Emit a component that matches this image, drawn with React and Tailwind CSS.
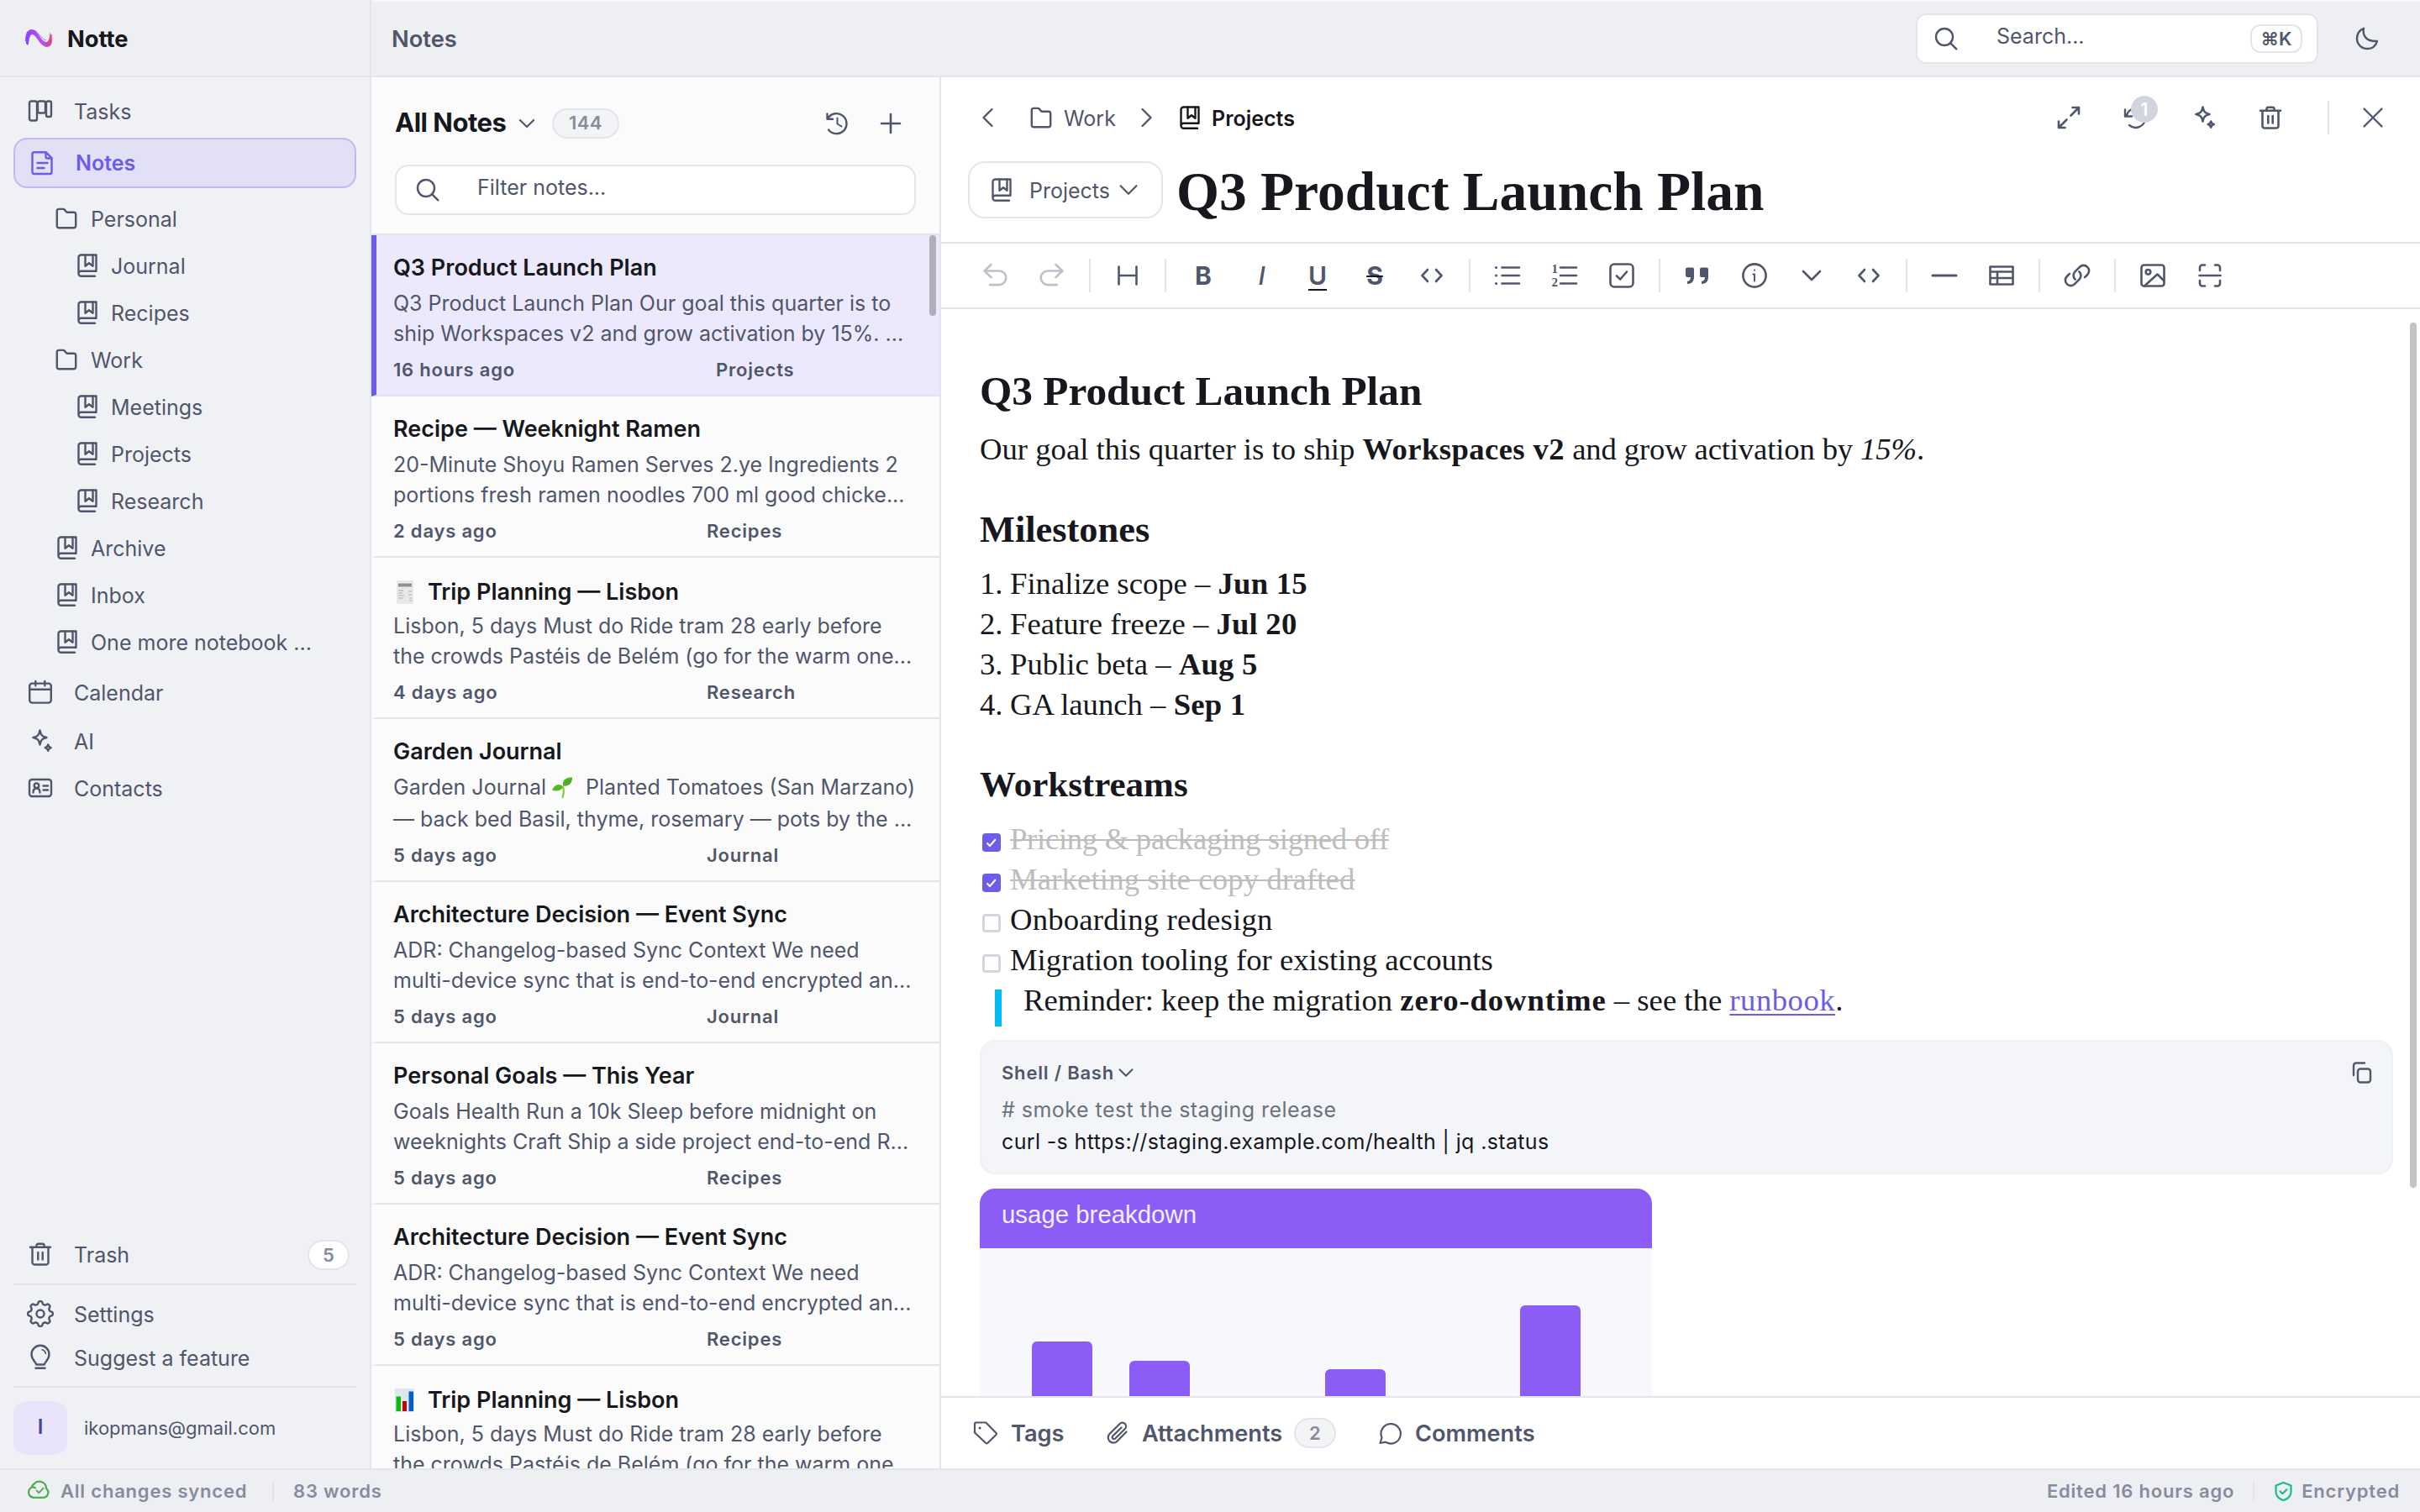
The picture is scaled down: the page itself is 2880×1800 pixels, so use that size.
import { clsx } from 'clsx'

const gearPoints = Array.from({ length: 120 }, (_, i) => {
  const angle = (i / 120) * Math.PI * 2
  const wave = Math.tanh(2 * Math.cos(angle * 8)) * 1.7
  const radius = 13.2 + wave
  return `${(16 + radius * Math.sin(angle)).toFixed(2)},${(16 - radius * Math.cos(angle)).toFixed(2)}`
}).join(' ')

const icons = {
  tasks: (
    <>
      <rect x="3" y="4.5" width="9" height="23" rx="2" />
      <rect x="13" y="4.5" width="9" height="14" rx="2" />
      <rect x="23" y="4.5" width="6" height="18.5" rx="2" />
    </>
  ),
  file: (
    <>
      <path d="M4.5 5.2a2 2 0 0 1 2-2h14l7 7V27a2 2 0 0 1-2 2h-19a2 2 0 0 1-2-2z" />
      <path d="M20.5 3.5v5a2 2 0 0 0 2 2h5M10.5 16h12M10.5 22h8" />
    </>
  ),
  folder: (
    <path d="M4.8 7.2V25a2.3 2.3 0 0 0 2.3 2.3h17.8a2.3 2.3 0 0 0 2.3-2.3V11a2.3 2.3 0 0 0-2.3-2.3h-8.4L13.7 5.6a2 2 0 0 0-1.5-.7H7.1a2.3 2.3 0 0 0-2.3 2.3z" />
  ),
  book: (
    <>
      <path d="M5.5 26V6.5a3 3 0 0 1 3-3h18v19.3H8.5a3 3 0 0 0 0 6H25" />
      <path d="M13.5 3.5v13.3l4.5-3.6 4.5 3.6V3.5" />
    </>
  ),
  calendar: (
    <>
      <rect x="3.2" y="5.6" width="25.6" height="23" rx="3" />
      <path d="M3.2 12.8h25.6M10.3 3v5.2M21.3 3v5.2" />
    </>
  ),
  sparkles: (
    <>
      <path d="M15.5 3.5c1.2 5.8 2.6 7.3 8 8.5-5.4 1.2-6.8 2.7-8 8.5-1.2-5.8-2.6-7.3-8-8.5 5.4-1.2 6.8-2.7 8-8.5z" />
      <path d="M25.2 20.5c.5 2.4 1.1 3 3.5 3.6-2.4.6-3 1.2-3.5 3.6-.5-2.4-1.1-3-3.5-3.6 2.4-.6 3-1.2 3.5-3.6z" />
    </>
  ),
  contact: (
    <>
      <rect x="3" y="6" width="26" height="20" rx="3" />
      <circle cx="11.5" cy="13.2" r="2.8" />
      <path d="M7.5 21.5c0-3.6 1.5-5 4-5s4 1.4 4 5M19.5 13.5h5.5M19.5 18.5h5.5" />
    </>
  ),
  trash: (
    <>
      <path d="M4 7.8h24M6.5 7.8V26A2.5 2.5 0 0 0 9 28.5h14a2.5 2.5 0 0 0 2.5-2.5V7.8M11.5 7.5V5.7a2 2 0 0 1 2-2h5a2 2 0 0 1 2 2v1.8" />
      <path d="M13.3 14v8.5M18.7 14v8.5" />
    </>
  ),
  gear: (
    <>
      <polygon points={gearPoints} />
      <circle cx="16" cy="16" r="4.5" />
    </>
  ),
  bulb: (
    <>
      <path d="M11.2 24.5c-.3-3-5.7-5.5-5.7-12.2a10.5 10.5 0 0 1 21 0c0 6.7-5.4 9.2-5.7 12.2z" />
      <path d="M10.5 28.8h11" />
      <path d="M18 6.8c2.5.6 3.8 2.2 4.4 4.6" strokeWidth="1.6" />
    </>
  ),
  search: (
    <>
      <circle cx="14" cy="14" r="10" />
      <path d="M21.3 21.3l7 7" />
    </>
  ),
  moon: <path d="M12 3.8c-1.7 8.5 3 16 16 15.2-1.8 6-6.3 9-11.5 9C9.5 28 4 22.8 4 16c0-5.5 3-10.2 8-12.2z" />,
  history: (
    <>
      <path d="M5.5 9.5a12 12 0 1 1 .5 14M4.5 4.5v6.3H11" />
      <path d="M16.5 9.5v7l5 3" strokeWidth="2" />
    </>
  ),
  plus: <path d="M16 5v22M5 16h22" />,
  chevronDown: <path d="M6 11l10 10 10-10" />,
  chevronLeft: <path d="M20.5 6l-10 10 10 10" />,
  chevronRight: <path d="M11.5 6l10 10-10 10" />,
  close: <path d="M5.5 5.5l21 21M26.5 5.5l-21 21" />,
  expand: <path d="M18.5 13.5L28 4M20.5 4H28v7.5M13.5 18.5L4 28M4 20.5V28h7.5" />,
  sync: <path d="M5 13.5A11.5 11.5 0 0 1 25 9M3 6.5v8h8M27 17.5A11.5 11.5 0 0 1 8 25" />,
  undo: <path d="M11.5 3L3.5 10.5l8 7.5M4 10.5h17a8.3 8.3 0 0 1 0 16.6H10" />,
  redo: <path d="M20.5 3l8 7.5-8 7.5M28 10.5H11a8.3 8.3 0 0 0 0 16.6h11" />,
  heading: <path d="M5.5 5.5v21M26.5 5.5v21M5.5 16h21" />,
  code: <path d="M11 9l-6.5 7 6.5 7M21 9l6.5 7-6.5 7" />,
  bullets: (
    <>
      <path d="M9.5 6.5H30M9.5 16H30M9.5 25.5H30" />
      <path d="M2.5 6.5h.1M2.5 16h.1M2.5 25.5h.1" strokeWidth="3" />
    </>
  ),
  numbered: (
    <>
      <path d="M11 6.5h19M11 16h19M11 25.5h19" />
      <g className="fill-current font-['Liberation_Serif',serif] font-bold" stroke="none" fontSize="15">
        <text x="0.5" y="13">1</text>
        <text x="0.5" y="29">2</text>
      </g>
    </>
  ),
  checkbox: (
    <>
      <rect x="2.5" y="2.5" width="27" height="27" rx="4.5" />
      <path d="M10 16.5l4.2 4L22 11.5" />
    </>
  ),
  quote: (
    <g className="fill-current" stroke="none">
      <path d="M2 8.5a2 2 0 0 1 2-2h6a2 2 0 0 1 2 2V18c0 5-3 8-8 8v-3c2.500-.4 4-2 4-5H4a2 2 0 0 1-2-2z" />
      <path d="M19 8.5a2 2 0 0 1 2-2h6a2 2 0 0 1 2 2V18c0 5-3 8-8 8v-3c2.500-.4 4-2 4-5h-4a2 2 0 0 1-2-2z" />
    </g>
  ),
  info: (
    <>
      <circle cx="16" cy="16" r="13.6" />
      <path d="M14.5 14.5H16v8M16 9.5v.3" strokeWidth="2" />
    </>
  ),
  minus: <path d="M2 16h28" strokeWidth="3" />,
  table: <path d="M2.5 5.5h27v21h-27zM2.5 11.5h27M2.5 19h27M11 11.5v15" />,
  link: (
    <>
      <path d="M13.5 20.5a6.5 6.5 0 0 1 0-9.2l5.5-5.5a6.5 6.5 0 0 1 9.2 9.2l-3.2 3.2" />
      <path d="M18.5 11.5a6.5 6.5 0 0 1 0 9.2L13 26.2a6.5 6.5 0 0 1-9.2-9.2L7 13.8" />
    </>
  ),
  image: (
    <>
      <rect x="2.5" y="3.5" width="27" height="25" rx="3" />
      <circle cx="10.5" cy="11.8" r="2.8" />
      <path d="M6 28.5l15.5-14 8 8" />
    </>
  ),
  scan: <path d="M4 10V6.5a3 3 0 0 1 3-3h3M22 3.5h3a3 3 0 0 1 3 3V10M28 22v3.5a3 3 0 0 1-3 3h-3M10 28.5H7a3 3 0 0 1-3-3V22M3.5 16h25" />,
  copy: (
    <>
      <rect x="12" y="11.5" width="15" height="16" rx="3" />
      <path d="M7 19V7.5a3 3 0 0 1 3-3h10" />
    </>
  ),
  tag: (
    <>
      <path d="M3 5a1.5 1.5 0 0 1 1.5-1.5h11.8L28.5 16a1.5 1.5 0 0 1 0 2L18.3 28a1.5 1.5 0 0 1-2 0L3 15.5z" />
      <path d="M9 10h.1" strokeWidth="3" />
    </>
  ),
  clip: (
    <path d="M26.5 14.5L15.5 25.7a6.2 6.2 0 0 1-9-8.7L18.6 5a4.3 4.3 0 0 1 6.2 6L13.3 22.5a2 2 0 0 1-3-2.9L20.5 9.5" />
  ),
  comment: <path d="M4.5 28l2-6.5A11.7 11.7 0 1 1 11.500 27c-2-.5-4.500.6-7 1z" />,
  cloud: (
    <>
      <path d="M10 26.5h13a6.5 6.5 0 0 0 3.8-11.5 9 9 0 0 0-15.6-6 6 6 0 0 0-2.7 4.3A7 7 0 0 0 10 26.5zM8.5 13.3c1.7-.3 3.2.2 4.3 1" />
      <path d="M14.5 17.5l3 3 5.5-6" strokeWidth="2" />
    </>
  ),
  shield: (
    <>
      <path d="M16 2.5l11.5 4.5v9c0 7-5 11.5-11.5 13.5C9.5 27.5 4.5 23 4.5 16V7z" />
      <path d="M11 16l3.5 3.5 6.5-6.5" />
    </>
  ),
}

function Icon({ name, size = 32, stroke = 2.4, className }) {
  return (
    <svg
      width={size}
      height={size}
      viewBox="0 0 32 32"
      fill="none"
      stroke="currentColor"
      strokeWidth={stroke}
      strokeLinecap="round"
      strokeLinejoin="round"
      className={clsx('shrink-0', className)}
    >
      {icons[name]}
    </svg>
  )
}

function Logo() {
  return (
    <svg width="34" height="26" viewBox="0 0 34 26" fill="none" className="shrink-0">
      <defs>
        <linearGradient id="logo" x1="0" y1="0" x2="34" y2="0" gradientUnits="userSpaceOnUse">
          <stop offset="0" stopColor="#8b3dff" />
          <stop offset="0.55" stopColor="#a855f7" />
          <stop offset="1" stopColor="#e0457b" />
        </linearGradient>
      </defs>
      <path
        d="M2 19C1 9 3 2 9 2c7 0 11 15 17 15 3 0 4-4 4.5-12C34 14 33 23 27 23 19 23 14 8 9.5 8 6 8 6 14 4.5 21z"
        fill="url(#logo)"
      />
      <path d="M12 3c6 4 9 11 14 12M1.5 16c0-5 .5-9 3-12M32.5 8c.5 5 .5 9-1.5 13" stroke="url(#logo)" strokeWidth="0.8" />
    </svg>
  )
}

function Receipt() {
  return (
    <svg width="26" height="28" viewBox="0 0 26 28" className="shrink-0">
      <path d="M4 0h20v28H4z" fill="#e9e9e9" />
      <path d="M6 4.5h16M6 6.5h16" stroke="#777" strokeWidth="1.5" />
      <path d="M6 12h6M6 15h5M6 18h7M6 21h6M18 13h4M18 17h4M19 21h3M19 24h3" stroke="#b0b0b0" strokeWidth="1.2" />
    </svg>
  )
}

function BarEmoji() {
  return (
    <svg width="26" height="28" viewBox="0 0 26 28" className="shrink-0">
      <path d="M2 0h23v28H2z" fill="#dce8f0" />
      <path d="M3.5 9.5H9V27H3.5z" fill="#0cba0c" />
      <path d="M11 15h5v12h-5z" fill="#c4060c" />
      <path d="M18.5 3.5H24V27h-5.5z" fill="#0a5cc8" />
    </svg>
  )
}

function Seedling() {
  return (
    <svg width="26" height="26" viewBox="0 0 26 26" className="shrink-0">
      <path d="M13.5 25c2-6 1.5-10 1-13" stroke="#7cc62e" strokeWidth="2" fill="none" />
      <path d="M14 10.5C13 3 18 .5 25 .5c0 7-4 11-11 10z" fill="#4fae1c" />
      <path d="M14.5 11.5C9 7 4 9 1 15.5c5 2 11 1 13.5-4z" fill="#5cb820" />
    </svg>
  )
}

function CountBadge({ children, className }) {
  return (
    <span
      className={clsx(
        'flex h-9 shrink-0 items-center justify-center rounded-full border-2 border-[#e4e5eb] text-[22px] font-semibold tracking-[0.4px] text-[#868c9e]',
        className,
      )}
    >
      {children}
    </span>
  )
}

const notebooks = [
  { name: 'Personal', icon: 'folder' },
  { name: 'Journal', icon: 'book', nested: true },
  { name: 'Recipes', icon: 'book', nested: true },
  { name: 'Work', icon: 'folder' },
  { name: 'Meetings', icon: 'book', nested: true },
  { name: 'Projects', icon: 'book', nested: true },
  { name: 'Research', icon: 'book', nested: true },
  { name: 'Archive', icon: 'book' },
  { name: 'Inbox', icon: 'book' },
  { name: 'One more notebook ...', icon: 'book' },
]

function NavItem({ icon, label, className, children }) {
  return (
    <div className={clsx('flex items-center pr-6 pl-8', className)}>
      <Icon name={icon} className="-mt-0.5" />
      <span className="ml-6 flex-1 pt-0.5">{label}</span>
      {children}
    </div>
  )
}

function Sidebar() {
  return (
    <aside className="flex w-[442px] shrink-0 flex-col border-r-2 border-[#e4e5eb] bg-[#f0f1f5] text-[25px]">
      <div className="flex h-[92px] shrink-0 items-center border-b-2 border-[#e4e5eb] bg-[#eeeff3] pt-0.5 pl-[29px]">
        <Logo />
        <span className="ml-[17px] pt-0.5 text-[27.3px] font-bold text-[#16181d]">Notte</span>
      </div>
      <NavItem icon="tasks" label="Tasks" className="mt-3 h-[58px]" />
      <div className="mx-4 mt-0.5 flex h-[60px] shrink-0 items-center rounded-2xl border-2 border-[#c0b9f2] bg-[#e2e0f5] pl-4 font-semibold text-[#6c5ce7]">
        <Icon name="file" />
        <span className="ml-6 pt-0.5">Notes</span>
      </div>
      <div className="mt-[9px]">
        {notebooks.map((item) => (
          <div key={item.name} className={clsx('flex h-14 items-center', item.nested ? 'pl-[88px]' : item.icon === 'book' ? 'pl-16' : 'pl-[63px]')}>
            <Icon name={item.icon} className="-mt-0.5" />
            <span className={clsx('pt-0.5', item.icon === 'folder' ? 'ml-[13px]' : 'ml-3')}>{item.name}</span>
          </div>
        ))}
      </div>
      <NavItem icon="calendar" label="Calendar" className="mt-[3px] h-[58px]" />
      <NavItem icon="sparkles" label="AI" className="h-[58px]" />
      <NavItem icon="contact" label="Contacts" className="h-[54px]" />

      <NavItem icon="trash" label="Trash" className="mt-auto mb-[5px] h-[58px]">
        <CountBadge className="w-[50px] bg-white">5</CountBadge>
      </NavItem>
      <div className="mx-4 mb-[9px] h-0.5 bg-[#e4e5eb]" />
      <NavItem icon="gear" label="Settings" className="h-[52px]" />
      <NavItem icon="bulb" label="Suggest a feature" className="h-[52px]" />
      <div className="mx-4 mt-[7px] h-0.5 bg-[#e4e5eb]" />
      <div className="my-4 flex items-center pl-4">
        <span className="flex size-16 items-center justify-center rounded-2xl bg-[#e7e4fb] pb-0.5 text-2xl font-semibold text-[#4c3fa8]">I</span>
        <span className="ml-5 text-[22px]">ikopmans@gmail.com</span>
      </div>
    </aside>
  )
}

function TopBar() {
  return (
    <header className="flex h-[92px] shrink-0 items-center border-t-2 border-b-2 border-t-[#f6f7f9] border-b-[#e4e5eb] bg-[#eeeff3] pl-6">
      <span className="pt-0.5 text-[27.3px] font-semibold">Notes</span>
      <div className="ml-auto flex h-[60px] w-[479px] items-center rounded-xl border-2 border-[#e4e5eb] bg-white pr-[17px] pl-[18px]">
        <Icon name="search" />
        <span className="ml-11 pb-1 text-[25px]">Search...</span>
        <span className="ml-auto flex h-[34px] w-[62px] items-center justify-center rounded-xl border-2 border-[#e4e5eb] text-[22px] font-semibold">
          ⌘K
        </span>
      </div>
      <Icon name="moon" className="mr-[47px] ml-[42px]" />
    </header>
  )
}

const notes = [
  {
    title: 'Q3 Product Launch Plan',
    lines: ['Q3 Product Launch Plan Our goal this quarter is to', 'ship Workspaces v2 and grow activation by 15%. ...'],
    time: '16 hours ago',
    notebook: 'Projects',
    active: true,
  },
  {
    title: 'Recipe — Weeknight Ramen',
    lines: ['20-Minute Shoyu Ramen Serves 2.ye Ingredients 2', 'portions fresh ramen noodles 700 ml good chicke...'],
    time: '2 days ago',
    notebook: 'Recipes',
  },
  {
    title: 'Trip Planning — Lisbon',
    emoji: <Receipt />,
    lines: ['Lisbon, 5 days Must do Ride tram 28 early before', 'the crowds Pastéis de Belém (go for the warm one...'],
    time: '4 days ago',
    notebook: 'Research',
  },
  {
    title: 'Garden Journal',
    tall: true,
    lines: [
      <>
        Garden Journal
        <span className="mr-[15px] ml-1.5">
          <Seedling />
        </span>
        Planted Tomatoes (San Marzano)
      </>,
      '— back bed Basil, thyme, rosemary — pots by the ...',
    ],
    time: '5 days ago',
    notebook: 'Journal',
  },
  {
    title: 'Architecture Decision — Event Sync',
    lines: ['ADR: Changelog-based Sync Context We need', 'multi-device sync that is end-to-end encrypted an...'],
    time: '5 days ago',
    notebook: 'Journal',
  },
  {
    title: 'Personal Goals — This Year',
    lines: ['Goals Health Run a 10k Sleep before midnight on', 'weeknights Craft Ship a side project end-to-end R...'],
    time: '5 days ago',
    notebook: 'Recipes',
  },
  {
    title: 'Architecture Decision — Event Sync',
    lines: ['ADR: Changelog-based Sync Context We need', 'multi-device sync that is end-to-end encrypted an...'],
    time: '5 days ago',
    notebook: 'Recipes',
  },
  {
    title: 'Trip Planning — Lisbon',
    emoji: <BarEmoji />,
    lines: ['Lisbon, 5 days Must do Ride tram 28 early before', 'the crowds Pastéis de Belém (go for the warm one'],
  },
]

function NoteCard({ note }) {
  return (
    <article
      className={clsx(
        'shrink-0 border-b-2 border-l-6 border-b-[#e4e5eb] pl-5 whitespace-nowrap',
        note.tall ? 'h-[194px]' : 'h-48',
        note.active ? 'border-l-[#6c5ce7] bg-[#ece9fc]' : 'border-l-transparent',
        note.emoji ? 'pt-[22px]' : 'pt-5',
      )}
    >
      <h3 className={clsx('flex h-9 items-center pt-0.5 text-[27px] font-semibold text-[#16181d]', note.emoji && '-mb-0.5')}>
        {note.emoji && <span className="mr-[15px]">{note.emoji}</span>}
        {note.title}
      </h3>
      <div className={note.tall ? 'mt-1.5' : 'mt-[7px]'}>
        {note.lines.map((line, i) => (
          <p key={i} className={clsx('flex items-center pt-0.5', note.tall ? 'h-[38px]' : 'h-9')}>
            {line}
          </p>
        ))}
      </div>
      {note.time && (
        <div className={clsx('flex h-7 items-center text-[22px] font-semibold tracking-[0.8px]', note.tall ? 'mt-2.5' : 'mt-[11px]')}>
          <span className={note.active ? 'w-[384px]' : 'w-[373px]'}>{note.time}</span>
          <span>{note.notebook}</span>
        </div>
      )}
    </article>
  )
}

function NoteList() {
  return (
    <section className="flex w-[678px] shrink-0 flex-col border-r-2 border-[#e4e5eb] bg-[#fbfbfc] text-[25px]">
      <div className="h-[188px] shrink-0 border-b-2 border-[#e4e5eb] px-7">
        <div className="flex h-[104px] items-center pt-[5px]">
          <h2 className="w-[134px] text-[31px] font-bold tracking-[-0.5px] whitespace-nowrap text-[#16181d]">All Notes</h2>
          <Icon name="chevronDown" size={26} stroke={2.6} className="ml-2.5" />
          <CountBadge className="ml-[17px] w-20 bg-[#f3f4f7]">144</CountBadge>
          <Icon name="history" className="mr-8 ml-auto" />
          <Icon name="plus" stroke={2.6} className="mr-3.5" />
        </div>
        <div className="flex h-[60px] items-center rounded-2xl border-2 border-[#e4e5eb] bg-white pl-[21px]">
          <Icon name="search" />
          <span className="ml-[43px] pb-1">Filter notes...</span>
        </div>
      </div>
      <div className="relative flex min-h-0 flex-1 flex-col overflow-hidden">
        {notes.map((note, i) => (
          <NoteCard key={i} note={note} />
        ))}
        <div className="absolute top-0 right-1 h-24 w-2 rounded-full bg-[#b2afbd]" />
      </div>
    </section>
  )
}

function Divider() {
  return (
    <div className="flex w-[22px] justify-center">
      <div className="h-10 w-0.5 bg-[#e4e5eb]" />
    </div>
  )
}

function Tool({ icon, width = 'w-[68px]', className, children }) {
  return (
    <div className={clsx('flex justify-center', width, className)}>{icon ? <Icon name={icon} stroke={2.6} /> : children}</div>
  )
}

function Toolbar() {
  return (
    <div className="flex h-[78px] shrink-0 items-center border-b-2 border-[#e4e5eb] pl-[30px] text-[30px]">
      <Tool icon="undo" className="text-[#bdc0c9]" />
      <Tool icon="redo" className="text-[#bdc0c9]" />
      <Divider />
      <Tool icon="heading" />
      <Divider />
      <Tool>
        <span className="font-bold">B</span>
      </Tool>
      <Tool className="pl-[3px]">
        <span className="font-medium italic">I</span>
      </Tool>
      <Tool>
        <span className="font-semibold underline decoration-[#16181d] decoration-2 underline-offset-[5px]">U</span>
      </Tool>
      <Tool>
        <span className="font-bold line-through decoration-[#16181d] decoration-2">S</span>
      </Tool>
      <Tool icon="code" />
      <Divider />
      <Tool icon="bullets" />
      <Tool icon="numbered" />
      <Tool icon="checkbox" />
      <Divider />
      <Tool icon="quote" />
      <Tool icon="info" />
      <Tool icon="chevronDown" />
      <Tool icon="code" />
      <Divider />
      <Tool icon="minus" />
      <Tool icon="table" />
      <Divider />
      <Tool icon="link" />
      <Divider />
      <Tool icon="image" />
      <Tool icon="scan" />
    </div>
  )
}

function EditorHeader() {
  return (
    <div className="shrink-0 border-b-2 border-[#e4e5eb] pb-7 text-[25px]">
      <div className="flex h-24 items-center pl-10">
        <Icon name="chevronLeft" />
        <Icon name="folder" className="ml-[31px]" />
        <span className="ml-[11px] w-[62px] pt-[3px]">Work</span>
        <Icon name="chevronRight" className="ml-5" />
        <Icon name="book" className="ml-5 text-[#16181d]" />
        <span className="ml-2.5 pt-[3px] font-semibold text-[#16181d]">Projects</span>
        <div className="ml-auto flex h-10 items-center pr-1">
          <Tool width="w-20" icon="expand" />
          <div className="relative flex w-20 justify-center">
            <Icon name="sync" />
            <span className="absolute -top-2.5 left-[34px] flex size-8 items-center justify-center rounded-full bg-[#d2d5de] text-[22px] font-semibold text-white">
              1
            </span>
          </div>
          <Tool width="w-20" icon="sparkles" />
          <Tool width="w-20" icon="trash" />
          <div className="ml-7 h-10 w-0.5 bg-[#e4e5eb]" />
          <div className="flex w-[104px] justify-center">
            <Icon name="close" />
          </div>
        </div>
      </div>
      <div className="mt-1 flex h-[68px] items-center pl-8">
        <div className="flex h-[68px] w-[232px] items-center rounded-[20px] border-2 border-[#e4e5eb] pl-[22px]">
          <Icon name="book" />
          <span className="ml-[17px] w-[94px] pt-1">Projects</span>
          <Icon name="chevronDown" size={30} className="ml-[9px]" />
        </div>
        <h1 className="ml-4 pt-1.5 font-['Liberation_Serif',serif] text-[65.5px] leading-none font-bold whitespace-nowrap text-[#16181d]">
          Q3 Product Launch Plan
        </h1>
      </div>
    </div>
  )
}

const milestones = [
  ['Finalize scope', 'Jun 15'],
  ['Feature freeze', 'Jul 20'],
  ['Public beta', 'Aug 5'],
  ['GA launch', 'Sep 1'],
]

const workstreams = [
  { text: 'Pricing & packaging signed off', done: true, tracking: 'tracking-[-0.3px]' },
  { text: 'Marketing site copy drafted', done: true, tracking: 'tracking-[0.15px]' },
  { text: 'Onboarding redesign', tracking: 'tracking-[0.2px]' },
  { text: 'Migration tooling for existing accounts' },
]

const usage = [
  { x: 62, top: 182 },
  { x: 178, top: 205 },
  { x: 411, top: 215 },
  { x: 643, top: 139 },
]

function CheckItem({ text, done, tracking }) {
  return (
    <li className="flex h-12 items-center">
      {done ? (
        <span className="mt-2 ml-[3px] flex size-[22px] items-center justify-center rounded-[4px] bg-[#6c5ce7] text-white">
          <svg width="16" height="16" viewBox="0 0 16 16" fill="none" stroke="currentColor" strokeWidth="2">
            <path d="M2.5 8.500l3.500 3.500 7-8" />
          </svg>
        </span>
      ) : (
        <span className="mt-2 ml-[3px] size-[22px] rounded-[4px] border-3 border-[#d3d5de]" />
      )}
      <span className={clsx('ml-[11px]', tracking, done && 'text-[#bdbdbd] line-through decoration-2')}>{text}</span>
    </li>
  )
}

function Document() {
  return (
    <div className="relative min-h-0 flex-1 overflow-hidden pt-[68px] pr-8 pl-[46px] font-['Liberation_Serif',serif] text-[36.7px] text-[#16181d]">
      <h2 className="flex h-[60px] items-center text-[49.3px] font-bold">Q3 Product Launch Plan</h2>
      <p className="mt-[15px] h-12 leading-[48px]">
        Our goal this quarter is to ship <b className="tracking-[0.4px]">Workspaces v2</b>
        <span className="tracking-[-0.15px]">
          {' '}
          and grow activation by <i>15%</i>.
        </span>
      </p>
      <h3 className="mt-[43px] flex h-14 items-center text-[44.4px] font-bold">Milestones</h3>
      <ol className="mt-[13px]">
        {milestones.map(([label, date], i) => (
          <li key={label} className="flex h-12 items-center">
            <span className="w-9">{i + 1}.</span>
            <span>
              {label} – <b className="tracking-[0.2px]">{date}</b>
            </span>
          </li>
        ))}
      </ol>
      <h3 className="mt-[43px] flex h-14 items-center text-[43px] font-bold">Workstreams</h3>
      <ul className="mt-[13px]">
        {workstreams.map((item) => (
          <CheckItem key={item.text} {...item} />
        ))}
      </ul>
      <div className="flex h-12">
        <div className="mt-[11px] ml-[18px] h-11 w-2 shrink-0 bg-[#00bcf2]" />
        <p className="ml-[26px] leading-[48px]">
          Reminder: keep the migration <b className="tracking-[0.9px]">zero-downtime</b> – see the{' '}
          <a className="tracking-[0.5px] text-[#6c5ce7] underline decoration-2 underline-offset-4">runbook</a>.
        </p>
      </div>

      <div className="mt-[23px] h-40 rounded-[18px] border-2 border-[#eef1f5] bg-[#f4f5f8] pt-[21px] pl-6 font-[Inter,sans-serif] text-[25px]">
        <div className="flex h-8 items-center text-[22px] font-semibold tracking-[0.8px] text-[#50566b]">
          <span className="w-[136px] whitespace-nowrap">Shell / Bash</span>
          <Icon name="chevronDown" size={24} stroke={2.8} />
          <Icon name="copy" className="mr-5 ml-auto" />
        </div>
        <p className="mt-[9px] h-[38px] leading-[38px] tracking-[0.47px] text-[#6a737d]"># smoke test the staging release</p>
        <p className="h-[38px] leading-[38px] tracking-[0.36px]">curl -s https://staging.example.com/health | jq .status</p>
      </div>

      <svg width="800" height="300" viewBox="0 0 800 300" className="mt-[17px] rounded-t-[18px]">
        <rect width="800" height="300" fill="#f7f8fb" />
        <rect width="800" height="71" fill="#8b5cf6" />
        <text x="26" y="41" fill="#f3eefe" className="font-['Liberation_Sans',sans-serif] text-[29.4px]">
          usage breakdown
        </text>
        {usage.map((bar) => (
          <rect key={bar.x} x={bar.x} y={bar.top} width="72" height="140" rx="6" fill="#8b5cf6" />
        ))}
      </svg>
      <div className="absolute top-4 right-1 h-[1030px] w-2 rounded-full bg-[#c3c3c4]" />
    </div>
  )
}

function EditorFooter() {
  return (
    <div className="flex h-[86px] shrink-0 items-center border-t-2 border-[#e4e5eb] pl-[37px] text-[27.2px] font-semibold whitespace-nowrap">
      <Icon name="tag" stroke={2.2} />
      <span className="ml-3.5 w-[61px] pt-0.5">Tags</span>
      <Icon name="clip" stroke={2.2} className="ml-[50px]" />
      <span className="ml-[13px] w-[166px] pt-0.5">Attachments</span>
      <CountBadge className="ml-[15px] w-[50px] bg-[#f3f4f7]">2</CountBadge>
      <Icon name="comment" stroke={2.2} className="ml-12" />
      <span className="ml-3.5 pt-0.5">Comments</span>
    </div>
  )
}

function StatusBar() {
  return (
    <footer className="flex h-[52px] shrink-0 items-center border-t-2 border-[#e4e5eb] bg-[#eeeff3] pr-6 pl-[30px] text-[22px] font-semibold tracking-[0.8px] whitespace-nowrap text-[#868c9e]">
      <Icon name="cloud" size={30} className="-mt-1 text-[#4caf50]" />
      <span className="ml-3 w-[222px]">All changes synced</span>
      <div className="mr-[23px] ml-[30px] h-6 w-0.5 bg-[#e2e3ea]" />
      <span>83 words</span>
      <span className="ml-auto">Edited 16 hours ago</span>
      <div className="mx-[22px] h-6 w-0.5 bg-[#e2e3ea]" />
      <Icon name="shield" size={25} stroke={2.8} className="text-[#1abc84]" />
      <span className="ml-[9px]">Encrypted</span>
    </footer>
  )
}

export default function App() {
  return (
    <div className="flex h-[1800px] w-[2880px] flex-col overflow-hidden bg-white font-[Inter,sans-serif] text-[#50566b]">
      <div className="flex min-h-0 flex-1">
        <Sidebar />
        <div className="flex min-w-0 flex-1 flex-col">
          <TopBar />
          <div className="flex min-h-0 flex-1">
            <NoteList />
            <main className="flex min-w-0 flex-1 flex-col">
              <EditorHeader />
              <Toolbar />
              <Document />
              <EditorFooter />
            </main>
          </div>
        </div>
      </div>
      <StatusBar />
    </div>
  )
}
